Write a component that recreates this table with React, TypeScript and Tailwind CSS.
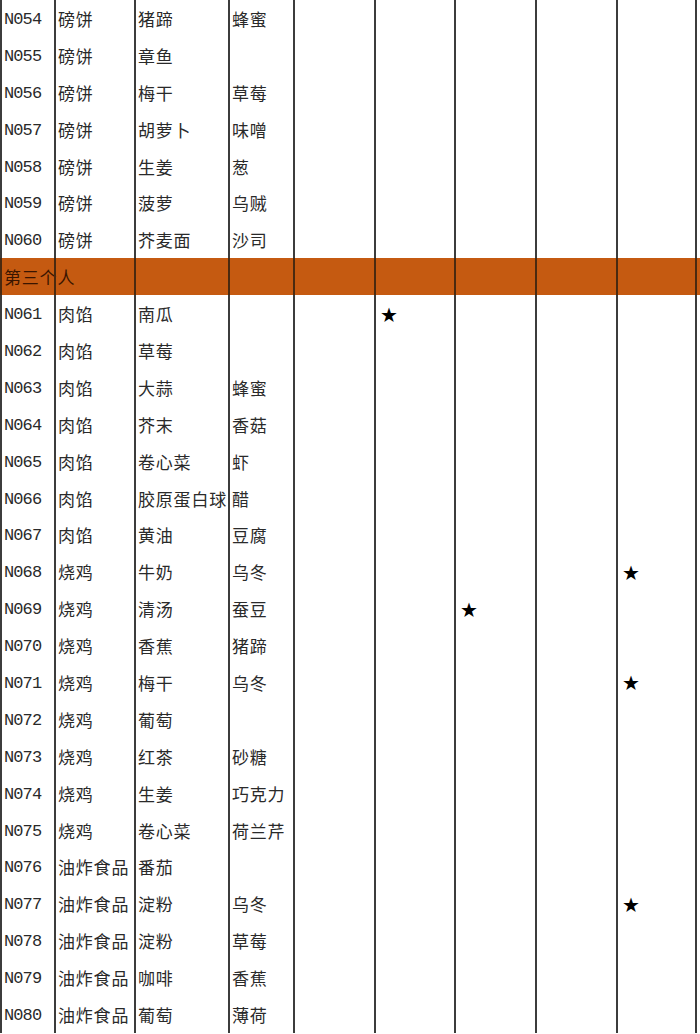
const widths = [54, 80, 94, 65, 81, 80, 81, 81, 81];
const colClasses = [
  "w-[54px]",
  "w-[80px]",
  "w-[94px]",
  "w-[65px]",
  "w-[81px]",
  "w-[80px]",
  "w-[81px]",
  "w-[81px]",
  "w-[81px]",
];

type Row = { id: string; a: string; b: string; c?: string; star?: number };

const top: Row[] = [
  { id: "N054", a: "磅饼", b: "猪蹄", c: "蜂蜜" },
  { id: "N055", a: "磅饼", b: "章鱼" },
  { id: "N056", a: "磅饼", b: "梅干", c: "草莓" },
  { id: "N057", a: "磅饼", b: "胡萝卜", c: "味噌" },
  { id: "N058", a: "磅饼", b: "生姜", c: "葱" },
  { id: "N059", a: "磅饼", b: "菠萝", c: "乌贼" },
  { id: "N060", a: "磅饼", b: "芥麦面", c: "沙司" },
];

const bottom: Row[] = [
  { id: "N061", a: "肉馅", b: "南瓜", star: 5 },
  { id: "N062", a: "肉馅", b: "草莓" },
  { id: "N063", a: "肉馅", b: "大蒜", c: "蜂蜜" },
  { id: "N064", a: "肉馅", b: "芥末", c: "香菇" },
  { id: "N065", a: "肉馅", b: "卷心菜", c: "虾" },
  { id: "N066", a: "肉馅", b: "胶原蛋白球", c: "醋" },
  { id: "N067", a: "肉馅", b: "黄油", c: "豆腐" },
  { id: "N068", a: "烧鸡", b: "牛奶", c: "乌冬", star: 8 },
  { id: "N069", a: "烧鸡", b: "清汤", c: "蚕豆", star: 6 },
  { id: "N070", a: "烧鸡", b: "香蕉", c: "猪蹄" },
  { id: "N071", a: "烧鸡", b: "梅干", c: "乌冬", star: 8 },
  { id: "N072", a: "烧鸡", b: "葡萄" },
  { id: "N073", a: "烧鸡", b: "红茶", c: "砂糖" },
  { id: "N074", a: "烧鸡", b: "生姜", c: "巧克力" },
  { id: "N075", a: "烧鸡", b: "卷心菜", c: "荷兰芹" },
  { id: "N076", a: "油炸食品", b: "番茄" },
  { id: "N077", a: "油炸食品", b: "淀粉", c: "乌冬", star: 8 },
  { id: "N078", a: "油炸食品", b: "淀粉", c: "草莓" },
  { id: "N079", a: "油炸食品", b: "咖啡", c: "香蕉" },
  { id: "N080", a: "油炸食品", b: "葡萄", c: "薄荷" },
];

const cjk = "font-['Noto_Sans_CJK_SC',sans-serif] text-[17px] leading-none tracking-[0.8px]";

function DataRow({ row }: { row: Row }) {
  const cells = [row.id, row.a, row.b, row.c ?? ""];
  return (
    <div className="flex h-[36.9px] items-center">
      {widths.map((_, i) => (
        <div
          key={i}
          className={`${colClasses[i]} flex h-full shrink-0 items-center overflow-visible whitespace-nowrap border-l-2 border-[#3c3c3c] pl-[2px] text-[#2a2a2a] ${i === 8 ? "border-r-2" : ""}`}
        >
          {i === 0 ? (
            <span className="pt-[2px] font-['Liberation_Mono',monospace] text-[17px] leading-none tracking-[-0.9px]">
              {cells[0]}
            </span>
          ) : i < 4 ? (
            <span className={cjk}>{cells[i]}</span>
          ) : row.star === i ? (
            <span className="pl-[2px] pt-[2px] font-['DejaVu_Sans',sans-serif] text-[20px] leading-none text-black">★</span>
          ) : null}
        </div>
      ))}
    </div>
  );
}

export default function App() {
  return (
    <div className="h-[1034px] w-[700px] overflow-hidden bg-white">
      {top.map((r) => (
        <DataRow key={r.id} row={r} />
      ))}
      <div className="flex h-[36.9px] items-center bg-[#c55a11]">
        {widths.map((_, i) => (
          <div
            key={i}
            className={`${colClasses[i]} flex h-full shrink-0 items-center overflow-visible whitespace-nowrap border-l-2 border-[#4a2a10] pl-[2px] ${i === 8 ? "border-r-2" : ""}`}
          >
            {i === 0 ? <span className={`${cjk} text-[#3a1500]`}>第三个人</span> : null}
          </div>
        ))}
      </div>
      {bottom.map((r) => (
        <DataRow key={r.id} row={r} />
      ))}
    </div>
  );
}
